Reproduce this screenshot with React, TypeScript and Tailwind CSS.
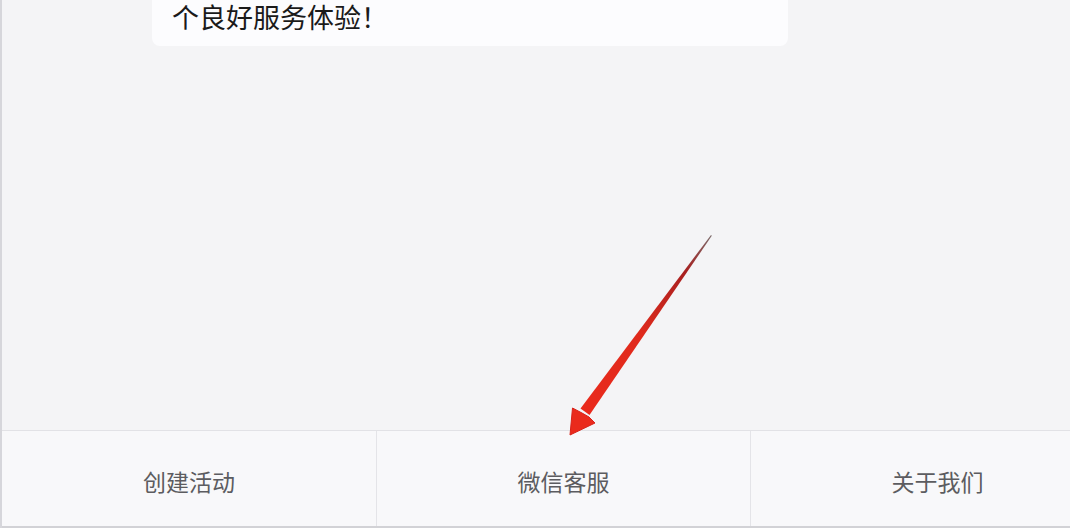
export default function App() {
  const tabs = ["创建活动", "微信客服", "关于我们"];

  return (
    <div
      className="relative flex h-[528px] w-[1070px] flex-col overflow-hidden border-l-2 border-[#d6d6db] bg-[#f4f4f6]"
      style={{ fontFamily: '"Noto Sans CJK SC", "Noto Sans", sans-serif' }}
    >
      {/* message card, cut off at the top */}
      <div className="flex-1">
        <div className="ml-[150px] h-[46px] w-[636px] rounded-b-lg bg-[#fcfcfe] pl-[20px]">
          <p className="text-[27px] leading-[34px] text-[#1a1a1a]">个良好服务体验！</p>
        </div>
      </div>

      {/* bottom tab bar */}
      <div className="flex h-[98px] w-[1124px] shrink-0 border-t border-b-2 border-t-[#e2e2e6] border-b-[#d2d2d6] bg-[#f8f8fa]">
        {tabs.map((t, i) => (
          <div
            key={t}
            className={`flex w-[374px] items-center justify-center pt-[6px] text-[23px] text-[#5c5c60] ${i > 0 ? "border-l border-[#e4e4e8]" : ""}`}
          >
            {t}
          </div>
        ))}
      </div>

      {/* red annotation arrow */}
      <svg className="pointer-events-none absolute left-0 top-0" width="1070" height="528" viewBox="0 0 1070 528">
        <defs>
          <linearGradient id="shaft" x1="709" y1="235" x2="580" y2="415" gradientUnits="userSpaceOnUse">
            <stop offset="0" stopColor="#7a6a6a" />
            <stop offset="0.2" stopColor="#a82020" />
            <stop offset="0.55" stopColor="#e02a1c" />
            <stop offset="1" stopColor="#ea2a1c" />
          </linearGradient>
        </defs>
        <polygon points="709,235 709.8,235.8 587.5,415 578.5,408.5" fill="url(#shaft)" />
        <polygon points="568,435 570.5,408 580,413 587,417 593,423" fill="#ea2a1c" stroke="#d8221a" strokeWidth="1" strokeLinejoin="round" />
      </svg>
    </div>
  );
}
